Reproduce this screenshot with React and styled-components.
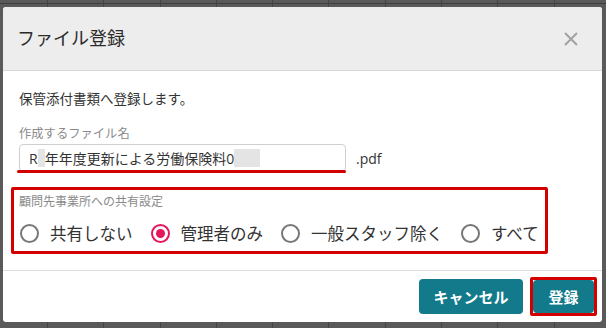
import React, { useState } from "react";
import styled, { createGlobalStyle } from "styled-components";

const GlobalStyle = createGlobalStyle`
  html, body {
    margin: 0;
    padding: 0;
    background: #5a5a5a;
  }
  body {
    font-family: "Open Sans", "Noto Sans CJK JP", sans-serif;
    color: #333;
  }
  * {
    box-sizing: border-box;
  }
`;

const Backdrop = styled.div`
  width: 606px;
  height: 328px;
  padding: 7px 4px 6px 3px;
  background-color: #5a5a5a;
  background-image:
    linear-gradient(180deg, transparent 0 3px, #3e3e3e 3px 4px, transparent 4px),
    repeating-linear-gradient(90deg, transparent 0 47px, #454545 47px 48px, transparent 48px 56.3px);
`;

const Modal = styled.div`
  width: 599px;
  height: 315px;
  background: #fff;
  border-radius: 3px;
  overflow: hidden;
  display: flex;
  flex-direction: column;
`;

const Header = styled.div`
  height: 64px;
  flex-shrink: 0;
  background: #ededed;
  border-bottom: 1px solid #d9d9d9;
  display: flex;
  align-items: center;
  justify-content: space-between;
  padding: 0 24px 0 14px;
`;

const Title = styled.h2`
  margin: 0;
  font-size: 18px;
  font-weight: 400;
  color: #2b2b2b;
  line-height: 1;
  padding-bottom: 2px;
`;

const CloseButton = styled.button`
  border: 0;
  background: none;
  padding: 0;
  width: 14px;
  height: 14px;
  cursor: pointer;
  display: flex;
`;

const Body = styled.div`
  flex: 1;
  padding: 18px 16px 16px;
  border-bottom: 1px solid #dcdcdc;
`;

const Intro = styled.p`
  margin: 0;
  font-size: 13.5px;
  line-height: 20px;
  color: #333;
`;

const FieldLabel = styled.div`
  margin-top: ${p => p.$top || 0}px;
  font-size: ${p => p.$size || 12.3}px;
  line-height: ${p => p.$line || 20}px;
  color: #8a8a8a;
`;

const FileRow = styled.div`
  display: flex;
  align-items: center;
`;

const InputWrap = styled.div`
  position: relative;
  width: 327px;
  height: 28px;
  border: 1px solid #cfcfcf;
  border-radius: 4px;
  display: flex;
  align-items: center;
  padding-left: 9px;
  font-size: 14px;
  color: #333;
  white-space: nowrap;
`;

const Redacted = styled.span`
  display: inline-block;
  width: ${p => p.$w}px;
  height: 18px;
  background: #e4e4e4;
  vertical-align: middle;
`;

const Underline = styled.span`
  position: absolute;
  left: -3px;
  right: -1px;
  bottom: -2px;
  height: 3px;
  border-radius: 2px;
  background: #d30000;
`;

const Suffix = styled.span`
  margin-left: 10px;
  font-size: 14px;
  color: #333;
`;

const ShareBox = styled.div`
  margin: 15px 0 0 -8px;
  width: 537px;
  border: 3px solid #d40000;
  border-radius: 2px;
  padding: 3px 6px 6px 5px;
`;

const RadioRow = styled.div`
  margin-top: 10px;
  height: 24px;
  display: flex;
  align-items: center;
  gap: 18px;
  padding-left: 1px;
`;

const RadioItem = styled.label`
  display: flex;
  align-items: center;
  gap: 11px;
  font-size: 16.5px;
  color: #333;
  cursor: pointer;
`;

const Circle = styled.span`
  width: 19px;
  height: 19px;
  border-radius: 50%;
  border: 2px solid ${p => (p.$checked ? "#e5175c" : "#777")};
  display: flex;
  align-items: center;
  justify-content: center;
  &::after {
    content: "";
    width: 9px;
    height: 9px;
    border-radius: 50%;
    background: ${p => (p.$checked ? "#e5175c" : "transparent")};
  }
`;

const Footer = styled.div`
  height: 51px;
  flex-shrink: 0;
  display: flex;
  align-items: center;
  justify-content: flex-end;
  gap: 7px;
  padding-right: 5px;
`;

const Button = styled.button`
  width: ${p => p.$w}px;
  height: ${p => p.$h}px;
  border: 0;
  border-radius: 4px;
  background: #127a8b;
  color: #fff;
  font-family: inherit;
  font-size: 15px;
  font-weight: 700;
  cursor: pointer;
`;

const Highlight = styled.span`
  display: inline-flex;
  border: 3px solid #d40000;
  border-radius: 2px;
`;

const options = ["共有しない", "管理者のみ", "一般スタッフ除く", "すべて"];

const CloseIcon = () => (
  <svg width="14" height="14" viewBox="0 0 14 14">
    <path d="M1 1L13 13M13 1L1 13" stroke="#a2a2a2" strokeWidth="2" />
  </svg>
);

const App = () => {
  const [share, setShare] = useState(1);

  return (
    <Backdrop>
      <GlobalStyle />
      <Modal>
        <Header>
          <Title>ファイル登録</Title>
          <CloseButton aria-label="閉じる">
            <CloseIcon />
          </CloseButton>
        </Header>
        <Body>
          <Intro>保管添付書類へ登録します。</Intro>
          <FieldLabel $top={15}>作成するファイル名</FieldLabel>
          <FileRow>
            <InputWrap>
              R<Redacted $w={7} />年年度更新による労働保険料0<Redacted $w={26} />
              <Underline />
            </InputWrap>
            <Suffix>.pdf</Suffix>
          </FileRow>
          <ShareBox>
            <FieldLabel $size={12} $line={18}>
              顧問先事業所への共有設定
            </FieldLabel>
            <RadioRow>
              {options.map((label, i) => (
                <RadioItem key={label} onClick={() => setShare(i)}>
                  <Circle $checked={share === i} />
                  {label}
                </RadioItem>
              ))}
            </RadioRow>
          </ShareBox>
        </Body>
        <Footer>
          <Button $w={104} $h={35}>
            キャンセル
          </Button>
          <Highlight>
            <Button $w={61} $h={33}>
              登録
            </Button>
          </Highlight>
        </Footer>
      </Modal>
    </Backdrop>
  );
};

export default App;
